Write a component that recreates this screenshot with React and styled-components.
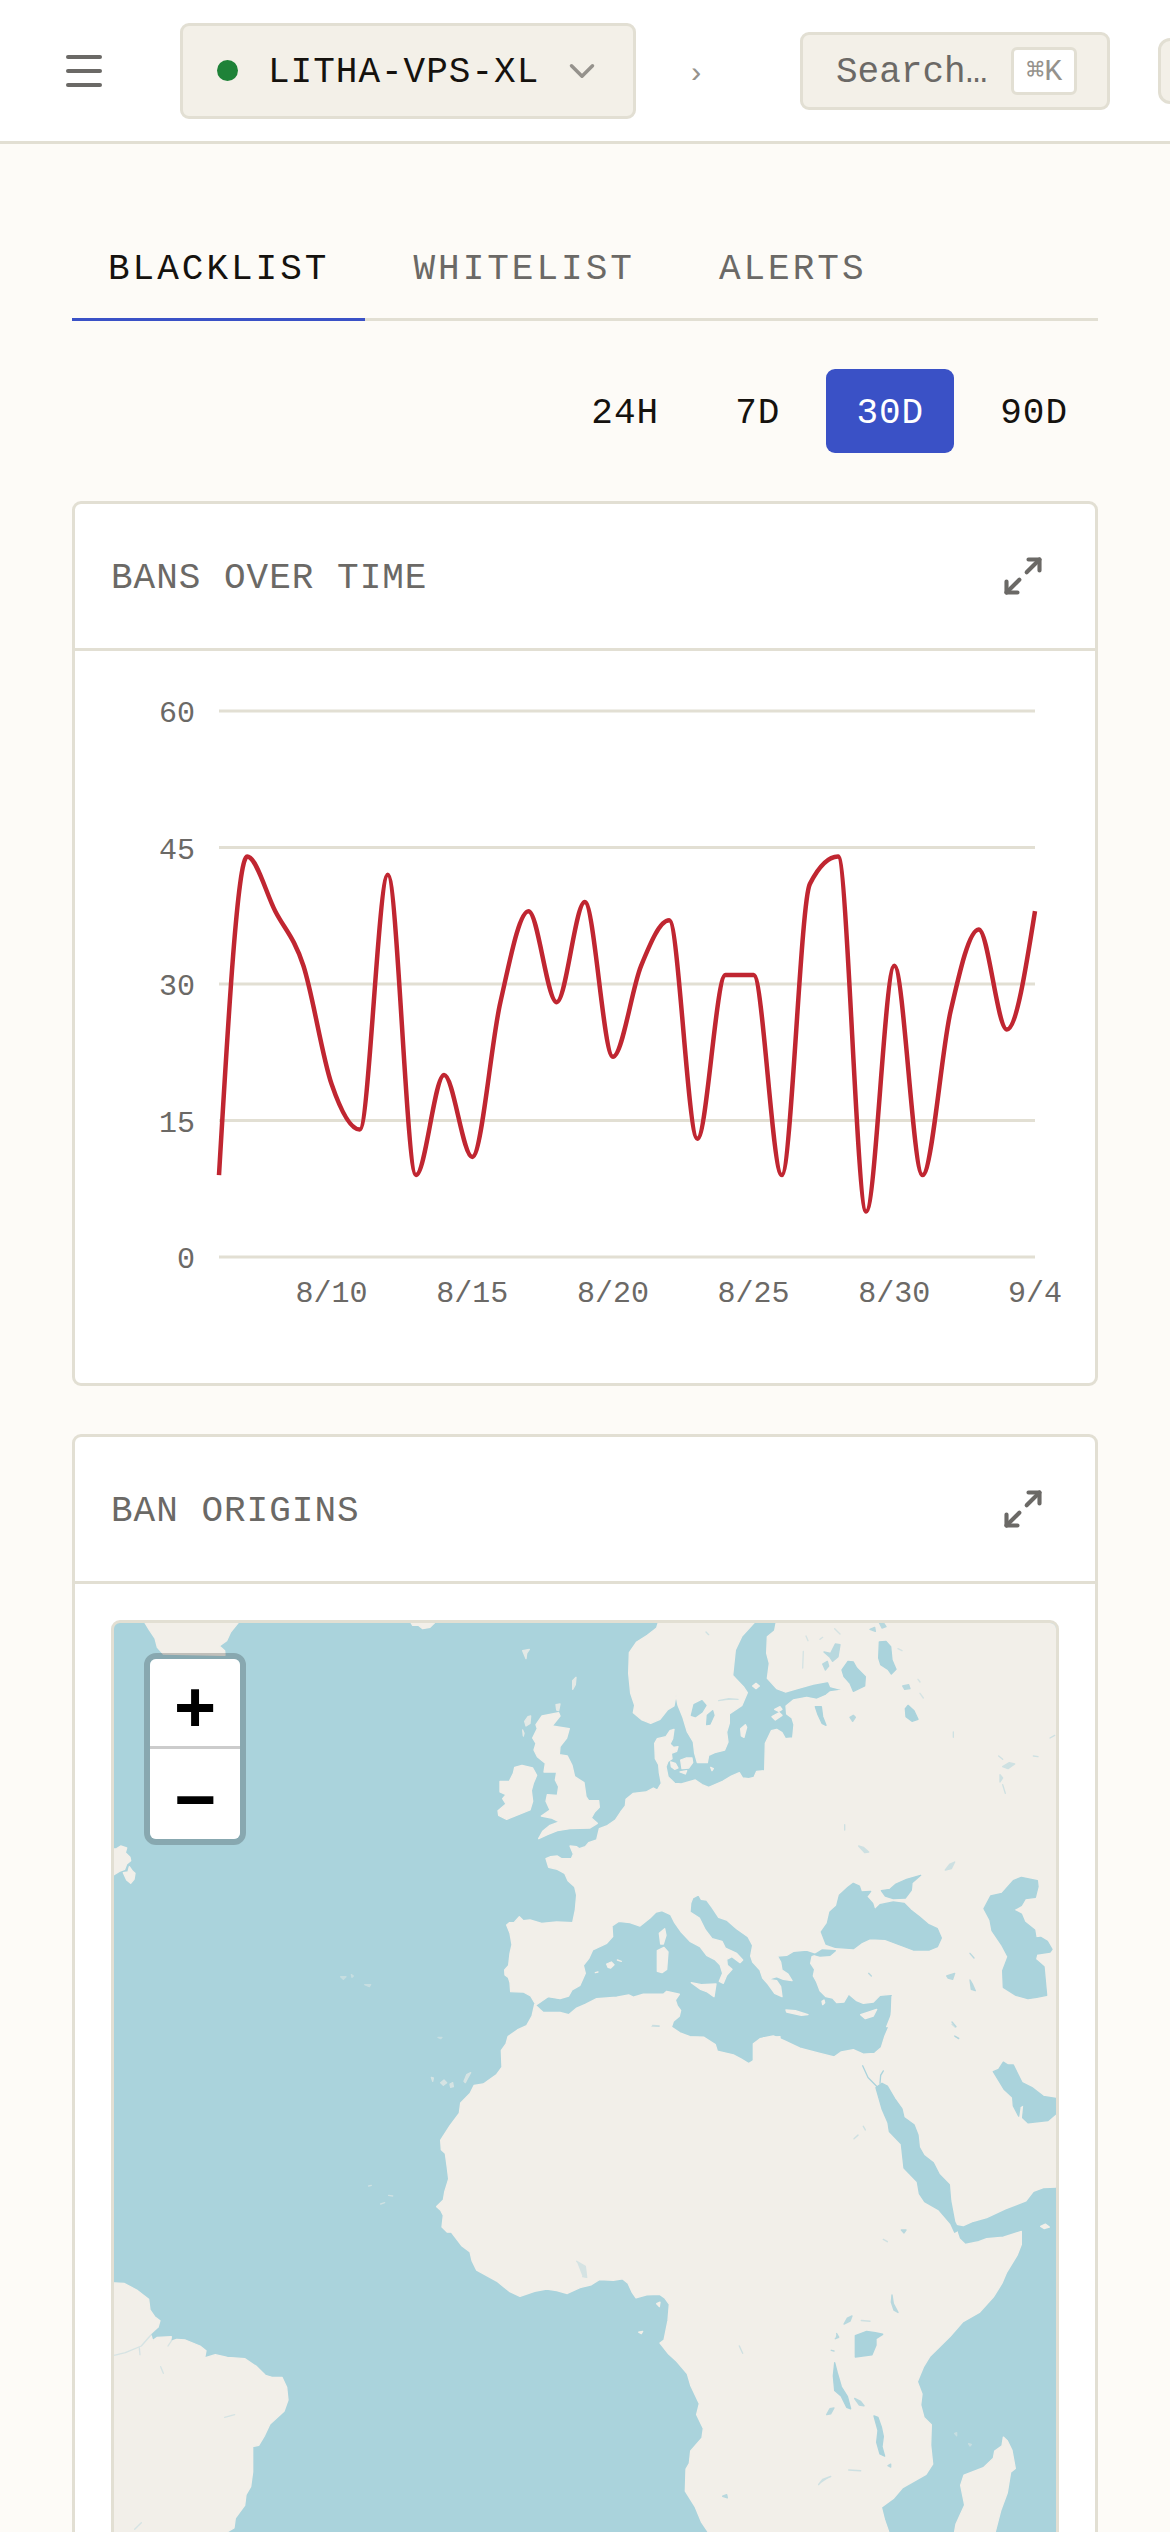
import { useState } from "react";
import styled, { createGlobalStyle } from "styled-components";
import { ChevronDown, Maximize2, Menu } from "lucide-react";

const colors = {
  page: "#fdfbf7",
  panel: "#ffffff",
  field: "#f3f0e8",
  border: "#e2dfd3",
  text: "#15120e",
  muted: "#6b6966",
  faint: "#95928c",
  accent: "#3a51c6",
  line: "#c02631",
  water: "#aad3dc",
  land: "#f2efe9",
};

const GlobalStyle = createGlobalStyle`
  *, *::before, *::after {
    box-sizing: border-box;
  }

  body {
    margin: 0;
    background: ${colors.page};
    color: ${colors.text};
  }

  body, button, select, kbd {
    font-family: "Liberation Mono", "DejaVu Sans Mono", monospace;
    font-size: 36px;
  }

  button, select {
    margin: 0;
    padding: 0;
    border: none;
    background: none;
    color: inherit;
    cursor: pointer;
  }
`;

const Shell = styled.div`
  display: flex;
  flex-direction: column;
  height: 100vh;
`;

const TopBar = styled.header`
  display: flex;
  align-items: center;
  flex: none;
  height: 144px;
  padding: 0 60px;
  overflow: hidden;
  background: ${colors.panel};
  border-bottom: 3px solid ${colors.border};

  & > * {
    flex: none;
  }
`;

const IconButton = styled.button`
  display: flex;
  color: ${colors.muted};
`;

const ServerPicker = styled.label`
  display: flex;
  align-items: center;
  height: 96px;
  margin-left: 72px;
  padding: 0 30px 0 34px;
  background: ${colors.field};
  border: 3px solid ${colors.border};
  border-radius: 9px;
  color: ${colors.faint};
`;

const StatusDot = styled.span`
  width: 21px;
  height: 21px;
  margin-right: 30px;
  border-radius: 50%;
  background: #1e8238;
`;

const ServerSelect = styled.select`
  appearance: none;
  margin-right: 21px;
  padding-top: 4px;
  color: ${colors.text};
  letter-spacing: 1px;
`;

const Crumb = styled.span`
  margin: 0 95px 0 51px;
  padding-top: 6px;
  color: ${colors.faint};
  font-size: 30px;
`;

const SearchButton = styled.button`
  display: flex;
  align-items: center;
  gap: 24px;
  height: 78px;
  padding: 0 30px 0 33px;
  background: ${colors.field};
  border: 3px solid ${colors.border};
  border-radius: 9px;
  color: ${colors.muted};
`;

const SearchText = styled.span`
  padding-top: 4px;
`;

const Shortcut = styled.kbd`
  display: flex;
  align-items: center;
  justify-content: center;
  min-width: 66px;
  height: 48px;
  background: ${colors.panel};
  border: 3px solid ${colors.border};
  border-radius: 6px;
  color: ${colors.faint};
  font-size: 30px;
`;

const AccountButton = styled.button`
  width: 66px;
  height: 66px;
  margin-left: 48px;
  background: ${colors.field};
  border: 3px solid ${colors.border};
  border-radius: 12px;
`;

const Content = styled.main`
  flex: 1;
  min-height: 0;
  padding: 72px;
  overflow-y: auto;
  scrollbar-width: none;
`;

const Tabs = styled.nav`
  display: flex;
  gap: 12px;
  border-bottom: 3px solid ${colors.border};
`;

const Tab = styled.button`
  height: 105px;
  margin-bottom: -3px;
  padding: 4px 36px 0;
  letter-spacing: 3px;
  color: ${(props) => (props.$active ? colors.text : colors.muted)};
  border-bottom: 3px solid
    ${(props) => (props.$active ? colors.accent : "transparent")};
`;

const Ranges = styled.div`
  display: flex;
  justify-content: flex-end;
  gap: 16px;
  margin: 48px 0;
`;

const RangeButton = styled.button`
  height: 84px;
  padding: 4px 30px 0;
  border-radius: 9px;
  font-weight: 500;
  letter-spacing: 1px;
  background: ${(props) => (props.$active ? colors.accent : "transparent")};
  color: ${(props) => (props.$active ? "#ffffff" : colors.text)};
`;

const Card = styled.section`
  background: ${colors.panel};
  border: 3px solid ${colors.border};
  border-radius: 9px;

  & + & {
    margin-top: 48px;
  }
`;

const CardHeader = styled.div`
  display: flex;
  align-items: center;
  justify-content: space-between;
  height: 147px;
  padding: 0 50px 0 36px;
  border-bottom: 3px solid ${colors.border};
`;

const CardTitle = styled.h2`
  margin: 0;
  padding-top: 4px;
  font-size: 36px;
  font-weight: 400;
  letter-spacing: 1px;
  color: ${colors.muted};
`;

const CardBody = styled.div`
  padding: 36px;
`;

const Chart = styled.svg`
  display: block;
  width: 100%;
  overflow: visible;

  text {
    font-size: 30px;
    fill: ${colors.muted};
  }
`;

const MapFrame = styled.div`
  position: relative;
  overflow: hidden;
  border: 3px solid ${colors.border};
  border-radius: 9px;
  background: ${colors.water};
`;

const MapSvg = styled.svg`
  display: block;
  width: 100%;

  path {
    stroke-width: 4;
    stroke-linejoin: round;
    stroke-linecap: round;
  }
`;

const Land = styled.g`
  fill: ${colors.land};
  stroke: ${colors.land};
`;

const Water = styled.g`
  fill: ${colors.water};
  stroke: ${colors.water};
`;

const ZoomControl = styled.div`
  position: absolute;
  top: 30px;
  left: 30px;
  display: flex;
  flex-direction: column;
  border: 6px solid rgba(0, 0, 0, 0.2);
  border-radius: 12px;
  background-clip: padding-box;
`;

const ZoomButton = styled.button`
  width: 90px;
  height: 90px;
  padding-top: 21px;
  background: #ffffff;
  color: #000000;
  font-size: 72px;
  font-weight: 700;
  line-height: 66px;

  &:first-child {
    border-bottom: 3px solid #cccccc;
    border-radius: 6px 6px 0 0;
  }

  &:last-child {
    border-radius: 0 0 6px 6px;
  }
`;

// bans per day, 8/6 - 9/4
const bans = [
  9, 44, 38, 32, 19, 14, 42, 9, 20, 11, 28, 38, 28, 39, 22, 32, 37, 13, 31, 31,
  9, 41, 44, 5, 32, 9, 27, 36, 25, 38,
];

const dayLabels = [
  { index: 4, text: "8/10" },
  { index: 9, text: "8/15" },
  { index: 14, text: "8/20" },
  { index: 19, text: "8/25" },
  { index: 24, text: "8/30" },
  { index: 29, text: "9/4" },
];

const plot = { left: 108, right: 924, top: 24, bottom: 570, max: 60 };

const xAt = (i) =>
  plot.left + (i * (plot.right - plot.left)) / (bans.length - 1);
const yAt = (v) => plot.bottom - (v * (plot.bottom - plot.top)) / plot.max;

// monotone cubic, so the curve never overshoots a data point
const monotonePath = (values) => {
  const step = xAt(1) - xAt(0);
  const ys = values.map(yAt);
  const slopes = ys.slice(1).map((y, i) => (y - ys[i]) / step);
  const tangents = ys.map((_, i) => {
    if (i === 0 || i === ys.length - 1) return null;
    const a = slopes[i - 1];
    const b = slopes[i];
    return (
      (Math.sign(a) + Math.sign(b)) *
      Math.min(Math.abs(a), Math.abs(b), Math.abs(a + b) / 4)
    );
  });
  const last = ys.length - 1;
  tangents[0] = (3 * slopes[0] - tangents[1]) / 2;
  tangents[last] = (3 * slopes[last - 1] - tangents[last - 1]) / 2;

  return ys.reduce((d, y, i) => {
    if (i === 0) return `M${xAt(0)},${y}`;
    const x0 = xAt(i - 1);
    const x1 = xAt(i);
    const third = step / 3;
    return `${d}C${x0 + third},${ys[i - 1] + third * tangents[i - 1]} ${
      x1 - third
    },${y - third * tangents[i]} ${x1},${y}`;
  }, "");
};

const BansChart = () => (
  <Chart viewBox="0 0 948 660" role="img" aria-label="Bans over time">
    {[60, 45, 30, 15, 0].map((value) => (
      <g key={value}>
        <line
          x1={plot.left}
          x2={plot.right}
          y1={yAt(value)}
          y2={yAt(value)}
          stroke={colors.border}
          strokeWidth="3"
        />
        <text x="84" y={yAt(value) + 11} textAnchor="end">
          {value}
        </text>
      </g>
    ))}
    {dayLabels.map((day) => (
      <text key={day.text} x={xAt(day.index)} y="615" textAnchor="middle">
        {day.text}
      </text>
    ))}
    <path
      d={monotonePath(bans)}
      fill="none"
      stroke={colors.line}
      strokeWidth="4.5"
    />
  </Chart>
);

// The map is cut in sheets, each with its own origin and scale.
const sheets = {
  northAtlantic: "translate(-12 -39)",
  europe: "translate(1038 -39)",
  blackSea: "translate(1818 -39)",
  westAfrica: "translate(858 1011) scale(1 1.0944)",
  eastAfrica: "translate(1818 1011) scale(1 1.0944)",
  brazil: "translate(-42 1431)",
};

const WorldMap = () => (
  <MapSvg viewBox="0 0 2826 3000" role="img" aria-label="Map of ban origins">
    <Land>
      <g transform={sheets.northAtlantic}>
        <path d="M100 30L118 60 135 85 142 112 160 132 345 136 344 122 328 108 350 92 362 66 385 38V30Z" />
        <path d="M898 30L908 46 925 46 938 56 960 52 978 34Z" />
        <path d="M0 718L20 716 32 708 50 714 46 728 60 742 62 752 50 762 44 778 28 784 0 802Z" />
        <path d="M40 788L54 786 58 770 68 784 75 790 72 808 62 820 50 810Z" />
        <path d="M692 1100h16l-8 8zM724 1094l6 4-4 4zM764 1124h18l-4 6zM984 1282h12l-4 4z" opacity=".4" />
        <path d="M992 1418l10-8 8 8-10 8zM1020 1422l8-4 2 12-8 2zM1062 1414l8-20 12-6-10 18-6 12zM964 1402l6 2-2 10z" opacity=".6" />
      </g>
      <g transform={sheets.europe}>
        <path
          d="M228 1185L212 1158 190 1146 152 1145 150 1118 145 1102 135 1095 134 1080 146 1066 150 1030 156 1004 150 970 140 945 148 938
          162 938 178 920 190 932 210 930 245 940 290 936 338 938 346 900 350 855 344 830 324 812 314 790 292 778 266 772 258 746 272 740
          292 738 304 746 334 746 340 732 330 708 350 710 358 716 376 710 386 698 410 690 418 656 440 648 466 630 482 606 496 588 498 568
          520 550 558 546 580 534 592 540 604 520 598 488 596 464 586 446 584 400 592 386 618 380 630 362 642 358 638 386 630 402 640 412
          654 410 650 424 634 430 636 446 624 454 618 470 624 500 644 520 664 522 706 510 726 524 746 532 788 514 814 498 838 488 848 504
          866 506 882 502 890 484 914 482 916 400 934 362 950 358 966 368 976 386 998 384 1002 344 996 324 980 312 978 288 1000 270 1040 262
          1070 268 1098 256 1110 246 1152 240 1112 230 1105 214 1060 222 1012 236 976 246 950 236 922 205 928 160 920 130 922 80 944 62 950 30
          L1800 30V1250H1280L1294 1215 1296 1160 1300 1152 1260 1156 1240 1176 1210 1180 1190 1172 1166 1152 1152 1176 1130 1178 1118 1164
          1098 1160 1080 1142 1070 1116 1060 1098 1064 1078 1052 1060 1056 1040 1076 1032 1040 1020 1000 1024 980 1036 952 1038 962 1056
          966 1080 984 1092 996 1112 970 1108 950 1100 924 1108 950 1112 962 1130 966 1160 944 1150 924 1122 908 1104 900 1080 878 1056
          872 1038 878 1006 864 980 830 956 800 930 776 922 756 892 740 870 724 868 716 854 698 864 692 880 690 906 718 924 736 960
          756 986 786 994 796 1014 830 1030 848 1050 840 1058 816 1040 800 1048 802 1066 816 1078 800 1096 790 1120 778 1114 788 1090
          780 1064 766 1050 740 1036 720 1010 690 994 664 966 644 938 632 914 606 902 588 906 570 924 540 948 510 938 476 934 456 948
          458 980 440 1000 398 1020 386 1046 370 1066 376 1090 360 1126 336 1140 326 1158 300 1166 264 1160Z"
        />
        <path
          d="M596 34L590 54 562 76 530 96 508 128 506 190 512 250 524 286 520 308 546 330 572 340 600 328 622 300 642 288 648 256 654 286
          668 320 682 366 700 396 704 430 712 458 742 458 746 436 764 428 794 420 804 396 800 366 808 340 808 312 846 286 862 248 850 230
          818 196 826 120 846 78 890 30Z"
        />
        <path
          d="M246 318L296 308 300 318 276 348 328 356 320 384 300 410 298 434 322 438 336 466 344 500 372 518 378 560 386 572 416 572
          418 592 404 606 394 624 412 640 390 654 330 656 292 662 262 674 236 686 248 664 270 646 298 636 274 624 244 618 270 600
          258 574 262 554 292 556 296 530 286 510 290 486 252 486 256 460 232 440 222 420 228 400 218 384 232 356 228 344Z"
        />
        <path
          d="M160 490L164 472 186 466 218 474 230 496 220 520 214 542 218 574 210 600 160 620 140 628 116 616 114 602 138 582 128 566
          138 554 120 546 120 514 148 514Z"
        />
        <path d="M204 320l8-2-2 22-12 8-4-14zM188 360l4 10-2 8zM288 284l12-2-4 20-6-2zM338 212l10-10-2 22-8 14zM188 122l20-4-8 12-2 16z" opacity=".8" />
        <path d="M662 450l16-6 18 0 2 14-12 16-20 2zM632 456l14 4 8 14-10 4-10-8zM660 486l20-4-4 10zM752 472l8 4-4 6z" />
        <path d="M842 356l14-12 4 8-8 30-8-4zM944 298l16-8 6 8-10 6zM936 320l22-12 8 8-20 14zM878 228l10-8 10 8-10 8z" />
        <path d="M598 970l16-14 4 20-8 26-8 0zM592 1022l20-10 12 14-4 52-14 10-14-4z" />
        <path d="M694 1118l30 6 44-2-6 38-20-14-20-8zM440 1062l14-6 8 8-10 10-8-2zM472 1050l12 4M406 1088l8-2M978 1200l28 2 38 12-20 2-44-10z" />
        <path d="M1202 1214l48-16-10 20-24 8zM1086 1174l6-4 2 8-6 6z" />
      </g>
      <g transform={sheets.westAfrica}>
        <path
          d="M404 122L420 136 430 144 480 144 506 150 530 132 556 122 590 106 650 102 686 96 700 102 730 94 790 94 800 86 838 94
          826 110 832 126 842 138 838 154 820 168 814 184 840 200 870 210 912 212 946 232 952 250 1000 260 1024 272 1046 284 1064 274
          1070 260 1068 236 1090 214 1140 210V1800H1020L924 1567 904 1540 886 1500 856 1456 858 1396 868 1380 872 1346 906 1310 910 1284
          890 1246 898 1216 872 1166 862 1134 830 1100 806 1080 780 1050 792 1042 804 988 808 944 794 926 778 916 740 918 708 926
          696 910 684 886 668 874 640 878 598 876 574 890 540 898 502 914 470 906 440 902 404 908 360 922 328 908 290 880 230 850
          216 824 210 800 186 784 154 746 142 746 126 732 130 700 122 686 110 676 130 658 134 636 146 600 142 570 136 530 124 520
          122 494 150 454 178 420 182 392 210 366 222 344 250 340 290 314 306 294 304 248 318 230 324 210 352 192 380 180 396 154Z"
        />
        <path d="M770 942l10-4-2 12zM716 1020l12-2-4 6z" />
      </g>
      <g transform={sheets.eastAfrica}>
        <path
          d="M100 230L120 216 160 208 194 222 240 242 300 256 342 266 364 252 400 246 430 258 464 256 484 240 494 210 512 172 516 130H1012
          V622L970 624 940 634 918 660 856 682 800 706 760 716 730 728 706 724 712 748 718 764 736 780 776 772 800 764 850 760 904 744
          904 780 892 808 860 856 846 886 820 924 778 966 728 992 690 1032 630 1086 610 1116 592 1156 606 1190 602 1220 612 1254 634 1274
          632 1330 638 1382 618 1410 548 1446 520 1476 484 1500 494 1536 506 1567V1800H100Z"
        />
        <path d="M850 1308L862 1318 876 1344 886 1394 872 1404 862 1460 842 1510 826 1567 780 1760H690L704 1567 708 1546 734 1494 722 1440 732 1412 790 1392 820 1366 824 1346 846 1332Z" />
        <path d="M962 730l14-6 12 8-16 4z" />
        <path d="M704 1298l6-2v8zM746 1326l8 2-4 4z" opacity=".4" />
      </g>
      <g transform={sheets.brazil}>
        <path
          d="M30 548L72 550 110 570 146 598 150 630 164 650 180 662 174 682 152 702 158 722 172 712 214 710 212 724 230 718 256 720 300 738
          318 752 314 774 346 764 382 772 434 776 470 800 496 826 516 832 546 832 560 862 564 900 552 934 510 972 494 1006 476 1036
          458 1040 458 1116 452 1160 438 1184 434 1216 406 1254 402 1284 384 1294 300 1600H30Z"
        />
        <path d="M806 258l8-2M866 286l12 2M842 312l12-4" opacity=".5" />
      </g>
    </Land>
    <Water>
      <g transform={sheets.europe}>
        <path d="M694 316L702 284 726 272 738 286 726 306 706 320ZM740 344l2-28 16-14 4 14-12 26z" />
        <path d="M776 272l30-6 28 2M738 66l8 8M578 1246l20 2" opacity=".5" />
      </g>
      <g transform={sheets.blackSea}>
        <path
          d="M400 820L418 828 424 846 452 844 440 860 458 880 464 900 480 884 520 876 552 880 572 900 598 920 626 944 652 956 664 984
          652 1010 628 1020 580 1020 548 1008 516 996 496 988 450 986 424 998 400 1016 346 1012 318 1002 304 966 322 940 330 906
          350 888 358 856 384 832Z"
        />
        <path d="M484 842L510 838 528 822 560 808 602 796 576 818 574 840 556 864 520 866 496 858Z" />
        <path d="M284 1034L306 1020 346 1022 330 1036 300 1038Z" />
        <path
          d="M792 896L812 858 846 850 880 812 904 802 952 812 954 830 946 862 916 866 904 886 880 900 904 912 914 936 944 960 948 984
          962 982 982 994 996 1018 990 1026 950 1032 946 1048 972 1070 980 1156 950 1162 924 1166 888 1156 850 1132 848 1082 864 1040
          846 1006 816 962 810 930Z"
        />
        <path d="M366 180L384 154 400 156 410 174 436 200 434 228 400 244 390 220 372 200Z" />
        <path d="M478 96l20-2 14 16 4 40 12 28-14 14-10-14-22-14-6-20zM286 290h18l4 30 10 26-12-6-12-26zM556 296l8-10 18 16 12 26-18 6-18-14z" />
        <path d="M312 126l20 4 14-28 14 2-6 36-16 14-8-12zM308 162l14-8 4 14-10 12zM450 58l14-6 2 12zM478 38h12l8 12-12 4zM548 228l18-4 4 12-16 2zM390 322l10-6 6 6-8 12z" opacity=".8" />
        <path d="M250 124l-2 50M344 56l16 16M258 78l6 14M300 88l8-6M534 116l12 6M594 208l6 8M600 250l10 14" opacity=".4" />
        <path d="M848 470l20-12 16 4-20 14zM840 494l8 10-8 12zM848 524l8 26M700 366v16M940 438l14 2M836 438l12 10M374 644v16M416 708l14 4 16 14-12 2zM676 780l14-18 14-6-10 20zM990 384l14-8" opacity=".5" />
        <path d="M680 1098l24-8-6 18-14-4zM750 1110l8 14 8 18-12-4zM750 1030l12 14M696 1236l12 14M704 1278l12 8M446 1090l8 8" opacity=".8" />
      </g>
      <g transform={sheets.eastAfrica}>
        <path
          d="M468 350L486 338 502 346 524 380 546 408 552 432 582 452 594 480 598 514 612 536 640 556 658 588 688 616 692 660 704 718
          716 740 704 746 692 722 656 684 614 662 598 640 592 608 552 570 544 504 508 470 504 446 486 408Z"
        />
        <path d="M428 290L444 322 472 348M480 338L482 316 490 304" fill="none" />
        <path d="M820 306L836 300 850 280 864 288 880 288 906 336 936 350 970 374 1012 380V418L984 440 924 446 908 432 912 396 900 402 896 428 880 400 878 376 852 354Z" />
        <path d="M406 1030L440 1018 466 1022 488 1026 468 1038 468 1056 456 1082 406 1088Z" />
        <path d="M344 1104L352 1132 364 1170 382 1196 392 1230 380 1226 364 1196 344 1180 340 1140Z" />
        <path d="M462 1250L474 1254 484 1280 490 1306 486 1334 494 1360 480 1354 470 1322 474 1290Z" />
        <path d="M516 918l4 24 14 24-12-6-8-22zM372 998l10-16 14-6-6 14zM404 1202l18 8 10 12-14-2zM320 1246l10-16 12-2-10 16zM544 740h14l-6 8zM350 1024l6 10-10 4M334 1070l8 2M504 1386l8-4v8zM8 1470l12-4 2 8z" opacity=".8" />
        <path d="M402 490l12-10M430 456l6 10M490 766l12 6M424 988l26 2M296 1438l12-14 24-8M386 1398l36 2M58 1058l10 20M696 176l10 8M706 210l10 4" opacity=".5" />
      </g>
      <g transform={sheets.westAfrica}>
        <path d="M530 826l26 14 4 30-12-2M756 182h20" opacity=".4" />
      </g>
      <g transform={sheets.brazil}>
        <path d="M174 686L150 708 124 738 76 758 42 766M204 738l12-18M118 744l2 20M182 800l8 20M374 952l30-8M104 1288l20-20" fill="none" opacity=".4" />
      </g>
    </Water>
  </MapSvg>
);

const Panel = ({ title, children }) => (
  <Card>
    <CardHeader>
      <CardTitle>{title}</CardTitle>
      <IconButton aria-label={`Expand ${title}`}>
        <Maximize2 size={44} strokeWidth={2.25} />
      </IconButton>
    </CardHeader>
    <CardBody>{children}</CardBody>
  </Card>
);

const tabs = ["BLACKLIST", "WHITELIST", "ALERTS"];
const ranges = ["24H", "7D", "30D", "90D"];

export default function App() {
  const [tab, setTab] = useState("BLACKLIST");
  const [range, setRange] = useState("30D");

  return (
    <Shell>
      <GlobalStyle />
      <TopBar>
        <IconButton aria-label="Open menu">
          <Menu size={48} />
        </IconButton>
        <ServerPicker>
          <StatusDot />
          <ServerSelect aria-label="Server">
            <option>LITHA-VPS-XL</option>
          </ServerSelect>
          <ChevronDown size={42} />
        </ServerPicker>
        <Crumb>›</Crumb>
        <SearchButton>
          <SearchText>Search…</SearchText>
          <Shortcut>⌘K</Shortcut>
        </SearchButton>
        <AccountButton aria-label="Account" />
      </TopBar>
      <Content>
        <Tabs>
          {tabs.map((name) => (
            <Tab key={name} $active={name === tab} onClick={() => setTab(name)}>
              {name}
            </Tab>
          ))}
        </Tabs>
        <Ranges>
          {ranges.map((name) => (
            <RangeButton
              key={name}
              $active={name === range}
              onClick={() => setRange(name)}
            >
              {name}
            </RangeButton>
          ))}
        </Ranges>
        <Panel title="BANS OVER TIME">
          <BansChart />
        </Panel>
        <Panel title="BAN ORIGINS">
          <MapFrame>
            <WorldMap />
            <ZoomControl>
              <ZoomButton aria-label="Zoom in">+</ZoomButton>
              <ZoomButton aria-label="Zoom out">−</ZoomButton>
            </ZoomControl>
          </MapFrame>
        </Panel>
      </Content>
    </Shell>
  );
}
